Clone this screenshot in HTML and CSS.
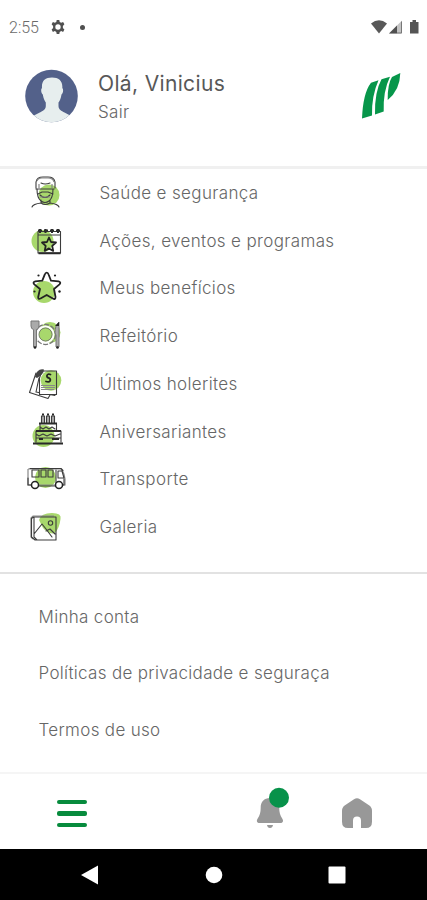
FILE: index.html
```html
<!DOCTYPE html>
<html lang="pt-BR">
<head>
<meta charset="utf-8">
<title>Menu</title>
<link rel="stylesheet" href="styles.css">
</head>
<body>
<div class="app">
  <header class="status">
    <span class="clock">2:55</span>
    <svg class="gear" width="14" height="16" viewBox="0 0 14 16"><path d="M5.7 1h2.6l.4 2 1.5.8 1.9-.8 1.3 2.3L11.9 7v2l1.5 1.6-1.3 2.3-1.9-.8-1.5.8-.4 2H5.7l-.4-2-1.5-.8-1.9.8L.6 10.600 2.100 9V7L.6 5.300 1.900 3l1.900.8L5.300 3z" fill="#505050"/><circle cx="7" cy="8" r="2.700" fill="#fff"/></svg>
    <span class="dot"></span>
    <svg class="signals" width="50" height="16" viewBox="0 0 50 16"><path d="M1 4.500Q9 -2 17 4.500L9 14.500z" fill="#585858"/><path d="M19 14.500 32 1.500v13z" fill="#c4c4c4"/><path d="M19 14.500 27 6.500v8z" fill="#505050"/><path d="M27 14h4.500V2.500" fill="none" stroke="#777" stroke-width="1"/><path d="M40 3h2.500V1h3.500v2h2.500v11.500H40z" fill="#555"/></svg>
  </header>

  <section class="profile">
    <svg class="avatar" width="54" height="54" viewBox="0 0 54 54"><defs><clipPath id="round"><circle cx="26.500" cy="27" r="26.300"/></clipPath></defs><g clip-path="url(#round)"><path fill="#53618a" d="M0 0h54v54H0z"/><path fill="#e7eeee" d="M27 8.500c-7 0-10.500 3.500-10 10.500-1.300 1-1 5 .8 6.500.7 4 1.700 6 3 8v3.500c0 3.500-3 5-6 6.500L6 48v8h42v-8l-8.500-4.500c-3-1.500-6-3-6-6.500v-3.500c1.500-2 2.300-4 3-8 1.800-1.500 2.100-5.500.8-6.500.5-7-3.300-10.500-10.300-10.500z"/></g></svg>
    <div class="who">
      <div class="hello">Olá, Vinicius</div>
      <div class="logout">Sair</div>
    </div>
    <svg class="logo" width="40" height="48" viewBox="361 72 40 48"><g fill="#07964a"><path d="M362 118.500Q363 93 371 82.700L378.500 80.300Q371.500 96 372 115.500z"/><path d="M375 114.500Q374.500 92 381.500 79.300L390 76.700Q383 91 383.700 111.500z"/><path d="M387.700 100Q387.500 84 392 77L400.300 73Q400 90 387.700 100z"/></g></svg>
  </section>

  <main class="menu">
    <a class="item"><svg class="icon" viewBox="0 0 48 44"><circle class="blob" cx="27" cy="24" r="10.500"/><path class="line" d="M14 17V11q1-5 7-5h5q6 0 7 5v6M14 18h18M15 18q0 9 4 12 4 3 8 0 4-3 4-12M19 12q4 2 9 0M16 23l4-2h6l5 2M18 24q5 5 10 0M19 29v3q-8 1-9 4M28 29v3q8 1 9 4M19 32q4 3 9 0"/><path class="soft" d="M15 10q1-3 5-3h6q5 0 6 4M17 13v4M30 13v4M18 26h10"/></svg><span>Saúde e segurança</span></a>
    <a class="item"><svg class="icon" viewBox="0 0 48 44"><circle class="blob" cx="20.500" cy="22" r="11"/><path class="line" d="M16 12.500h22.500V34H16zM16 16h22.500"/><path class="bold" d="M18 10v4M23.500 10v4M30 10v4M36 10v4M16.500 34.300h22"/><path class="bold" d="M16 11.500h22.500" stroke-dasharray="4 2"/><path class="line heavy" d="m27 18.500 2 4.500 5 .5-3.800 3.400 1 5-4.200-2.500-4.300 2.500 1-5-3.700-3.400 5-.5z"/></svg><span>Ações, eventos e programas</span></a>
    <a class="item"><svg class="icon" viewBox="0 0 48 44"><circle class="blob" cx="22" cy="26" r="11"/><path class="line heavy" d="M24.700 6.700q1.300 0 2 2l2.300 6 7.500.7q3 .8 1 3L32 23l1.500 8q0 3-2.700 1.500L24.700 29l-6.200 3.500q-2.500 1-2.300-1.500L18 23l-5.700-4.600q-2-2.200 1-3l7-.7 2.400-6q.7-2 2-2z"/><g fill="#222"><circle cx="16.500" cy="9.500" r="1.100"/><circle cx="33" cy="9.500" r="1.100"/><circle cx="12.500" cy="25.500" r="1.100"/><circle cx="37.500" cy="25.500" r="1.200"/></g></svg><span>Meus benefícios</span></a>
    <a class="item"><svg class="icon" viewBox="0 0 48 44"><circle class="blob" cx="28" cy="18.500" r="10.500"/><circle cx="23.500" cy="20.500" r="10" fill="none" stroke="#777" stroke-dasharray="5 1.500" stroke-width="1.300"/><circle cx="23.500" cy="20.500" r="8" fill="none" stroke="#fff" stroke-width="2"/><circle class="blob" cx="23.500" cy="20.500" r="6.500" stroke="#78836b"/><path d="M9 7v5q0 3 2.500 3.500V33h3V15.500Q17 15 17 12V7zM34 33h3V8q-4 3-4 11l1 2z" fill="#aaa" stroke="#777" stroke-width="1"/><g fill="#222"><circle cx="13" cy="33.500" r="1.300"/><circle cx="35.500" cy="33.500" r="1.300"/><path d="m33 12 4-4v4z"/></g></svg><span>Refeitório</span></a>
    <a class="item"><svg class="icon" viewBox="0 0 48 44"><path class="line" d="M14 11 7.500 30.500 26 36.500 28 33"/><path class="line" d="M17 16 14 30l19 3.500"/><path d="M20 9h14.500v23.500H17.500V16z" fill="#fff"/><circle class="blob" cx="29" cy="18.500" r="10.300"/><path class="line" d="M20 9h14.500v23.500H17.500V16z"/><path d="M13 15q2-9 9-7.500 0 4.500-7 8.500z" fill="#444"/><path class="soft" d="M19 23.500h14M19 25.500h14M19 27.500h13"/><path class="line heavy" d="M28.500 12.500q-3-1-3.500 1t2 2.500q2 1 1 3-1 1.500-4 .5"/></svg><span>Últimos holerites</span></a>
    <a class="item"><svg class="icon" viewBox="0 0 48 44"><circle class="blob" cx="21.500" cy="26" r="11"/><path d="M21 6v7M26 6v7M31 6v7" stroke="#aaa" stroke-width="3"/><path class="line" d="M19.500 13V6h3v7M24.500 13V6h3v7M29.500 13V6h3v7M18 20v-6.500h16.500V20M14 32V21h25v11M14 28h25M18 17l3 2 3-2 3 2 3-2 3 2M14 24l3 2 4-2 4 2 4-2 4 2 5-2"/><path class="bold" d="M17 13.500h18M14 21h25M11 33.500h30M20 4.500h2M25 4.500h2M30 4.500h2M17 29h4M30 29h7"/></svg><span>Aniversariantes</span></a>
    <a class="item"><svg class="icon" viewBox="0 0 48 44"><circle class="blob" cx="23.500" cy="20.500" r="10.500"/><path class="soft" d="M6 12h33q3 3 4 10v6h-3M33 28H17M9 28H6V12"/><path class="line" d="M8 11.500h31l2 2M10 13h7v7h-7zM19 13h5v7h-5zM26 13h5v7h-5zM34 13v14M36 14h4l2 7h-6zM33 29H17M9 28H6v-7M42 22v6h-2"/><g fill="#fff" stroke="#222" stroke-width="1.500"><circle cx="13" cy="28" r="3.500"/><circle cx="37" cy="28" r="3.500"/></g></svg><span>Transporte</span></a>
    <a class="item"><svg class="icon" viewBox="0 0 48 44"><path class="blob" d="M17 15q2-7 13-7 10 0 8.500 6-1 9-5.500 14-6 2-12-5z"/><path class="soft" d="M11 34 9 32V13l2-2h21"/><path class="line" d="M11.500 12h22.500v23H13l-3.500-3V13.500zM12 12v20l3 3M12 29l8-10 4 5 6 8M24 26l4-2 5 5"/><circle class="line" cx="28.500" cy="18" r="2.200"/></svg><span>Galeria</span></a>
  </main>

  <nav class="links">
    <a>Minha conta</a>
    <a>Políticas de privacidade e seguraça</a>
    <a>Termos de uso</a>
  </nav>

  <nav class="tabs">
    <span class="burger"><i></i><i></i><i></i></span>
    <svg class="bell" width="38" height="44" viewBox="256 785 38 44"><path fill="#989898" d="M270 798c-6 0-9.300 4-9.300 9.500 0 5-1 8-3 11-1.700 2.700-.7 4.500 2 4.500h20.500c2.700 0 3.700-1.800 2-4.500-2-3-3-6-3-11 0-5.500-3.200-9.500-9.200-9.500zM267 825h6q-.5 3-3 3t-3-3z"/><circle cx="279" cy="797.700" r="10" fill="#07924a"/></svg>
    <svg class="home" width="30" height="30" viewBox="0 0 30 30"><path fill="#989898" d="M12 1.200q3-2 6 0l9 6q3 2 3 5.500v11q0 6.300-6 6.300h-5v-7.500a4 4 0 0 0-8 0V30H6q-6 0-6-6.300v-11Q0 9.200 3 7.200z"/></svg>
  </nav>

  <footer class="system">
    <svg width="18" height="20" viewBox="0 0 18 20"><path fill="#fff" d="M17 .5v19L0 10z"/></svg>
    <svg width="18" height="18" viewBox="0 0 18 18"><circle cx="9" cy="9" r="8.300" fill="#fff"/></svg>
    <svg width="18" height="18" viewBox="0 0 18 18"><rect x=".5" y=".5" width="17" height="17" rx="1" fill="#fff"/></svg>
  </footer>
</div>
</body>
</html>
```
FILE: styles.css
```css
* { box-sizing: border-box; }
body {
  margin: 0;
  background: #fff;
  color: #666;
  font-family: Inter, "Liberation Sans", sans-serif;
  font-weight: 300;
}
.app { width: 427px; height: 900px; display: flex; flex-direction: column; overflow: hidden; }
svg { display: block; flex: none; }

.status { height: 54px; padding: 0 7px 0 9px; display: flex; align-items: center; }
.clock { width: 42px; padding-top: 1px; font-family: Roboto, sans-serif; font-size: 16px; color: #6a6a6a; }
.dot { width: 5px; height: 5px; margin-left: 15px; border-radius: 50%; background: #505050; }
.signals { margin-left: auto; }

.profile { height: 115px; padding: 15px 26px 0 25px; display: flex; align-items: flex-start; border-bottom: 3px solid #f0f0f0; }
.who { margin-left: 19px; }
.hello { margin-top: 1px; font-size: 21px; line-height: 28px; letter-spacing: .35px; font-weight: 400; color: #585858; }
.logout { font-size: 17px; line-height: 28px; letter-spacing: .3px; }
.logo { margin: 3px 0 0 auto; }

.menu { height: 405px; padding-top: 0; border-bottom: 2px solid #e2e2e2; display: grid; grid-auto-rows: 47.750px; font-size: 17px; letter-spacing: .360px; }
.item { display: grid; grid-template-columns: 77.500px 1fr; align-items: center; padding-left: 22px; }
.icon { width: 48px; height: 44px; }
.blob { fill: #a8d86c; }
.line { fill: none; stroke: #3c3c3c; stroke-width: 1.100; stroke-linejoin: round; stroke-linecap: round; }
.heavy { stroke: #222; stroke-width: 1.800; }
.bold { fill: none; stroke: #2a2a2a; stroke-width: 2; }
.soft { fill: none; stroke: #888; stroke-width: 1.200; }

.links { height: 199.500px; padding: 15px 0 0 38.500px; border-bottom: 2px solid #f5f5f5; display: grid; grid-auto-rows: 56.250px; align-items: center; font-size: 17px; letter-spacing: .320px; }

.tabs { height: 75.500px; padding: 0 55px 0 57px; display: flex; align-items: flex-start; }
.burger { width: 30px; margin: 26px 169px 0 0; display: grid; gap: 7px; }
.burger i { height: 4.500px; border-radius: 2px; background: #078b3d; }
.bell { margin-top: 11.500px; }
.home { margin: 24.500px 0 0 auto; }

.system { height: 51px; padding: 0 81px 0 81px; display: flex; align-items: center; justify-content: space-between; background: #000; }
```
